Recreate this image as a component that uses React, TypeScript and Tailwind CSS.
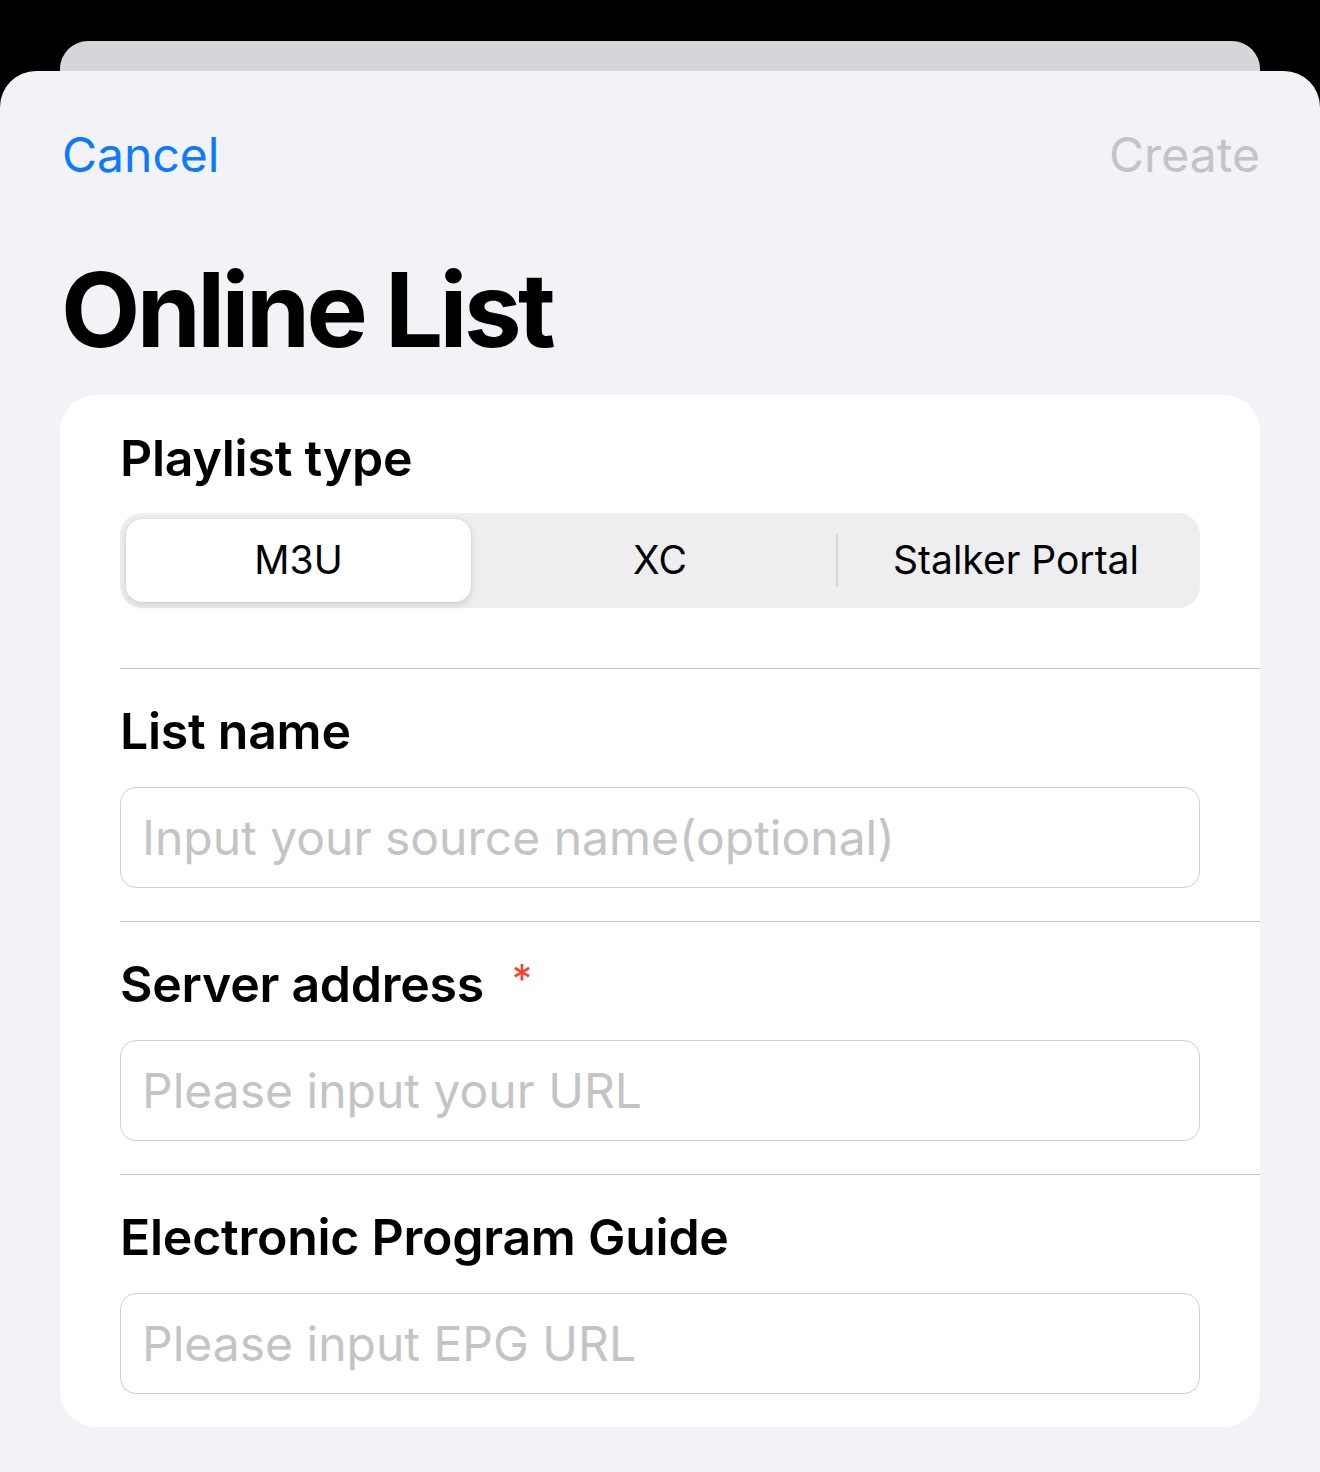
const font = { fontFamily: 'Inter, "Noto Sans", sans-serif' };

const Divider = () => <div className="h-px bg-[#c6c6c8] ml-[60px]" />;

const Field = ({ label, placeholder, required }: { label: string; placeholder: string; required?: boolean }) => (
  <div className="px-[60px] pt-[32px] pb-[33px]">
    <div className="flex items-start h-[60px]">
      <span className="text-[50px] leading-[60px] font-semibold text-black tracking-[-0.005em]">{label}</span>
      {required && <span className="ml-[28px] text-[40px] leading-[50px] text-[#ff3b30]">*</span>}
    </div>
    <div className="mt-[26px] h-[101px] rounded-[16px] border-[1.5px] border-[#cfcfd3] bg-white flex items-center px-[21px]">
      <span className="text-[48px] text-[#c4c4c6]">{placeholder}</span>
    </div>
  </div>
);

export default function App() {
  return (
    <div className="h-[1472px] bg-black overflow-hidden" style={font}>
      {/* card behind the sheet */}
      <div className="pt-[41px] px-[60px]">
        <div className="h-[30px] bg-[#d6d6da] rounded-t-[28px]" />
      </div>

      {/* sheet */}
      <div className="h-[1401px] bg-[#f2f2f7] rounded-t-[36px] px-[60px] pt-[54px]">
        <div className="flex justify-between items-center h-[60px]">
          <span className="text-[48px] leading-[60px] text-[#0a7aff] ml-[2px]">Cancel</span>
          <span className="text-[48px] leading-[60px] text-[#c4c4c6]">Create</span>
        </div>

        <h1 className="mt-[62px] text-[103px] leading-[125px] font-bold text-black tracking-[-0.035em] ml-[1px]">Online List</h1>

        <div className="mt-[23px] bg-white rounded-[36px] overflow-hidden">
          <div className="px-[60px] pt-[33px] pb-[60px]">
            <div className="text-[50px] leading-[60px] font-semibold text-black tracking-[-0.005em]">Playlist type</div>
            <div className="mt-[25px] h-[95px] rounded-[22px] bg-[#eeeef0] p-[6px] grid grid-cols-3 items-center">
              <div className="h-full mr-[11px] rounded-[16px] bg-white shadow-[0_3px_8px_rgba(0,0,0,0.12),0_0_0_1px_rgba(0,0,0,0.03)] flex items-center justify-center text-[39px] text-black">
                M3U
              </div>
              <div className="h-full flex items-center justify-center text-[39px] text-black relative">
                XC
                <div className="absolute right-0 top-[15px] bottom-[15px] w-[2px] bg-[#d4d4d8]" />
              </div>
              <div className="h-full flex items-center justify-center text-[39px] text-black">Stalker Portal</div>
            </div>
          </div>
          <Divider />
          <Field label="List name" placeholder="Input your source name(optional)" />
          <Divider />
          <Field label="Server address" placeholder="Please input your URL" required />
          <Divider />
          <Field label="Electronic Program Guide" placeholder="Please input EPG URL" />
        </div>
      </div>
    </div>
  );
}
